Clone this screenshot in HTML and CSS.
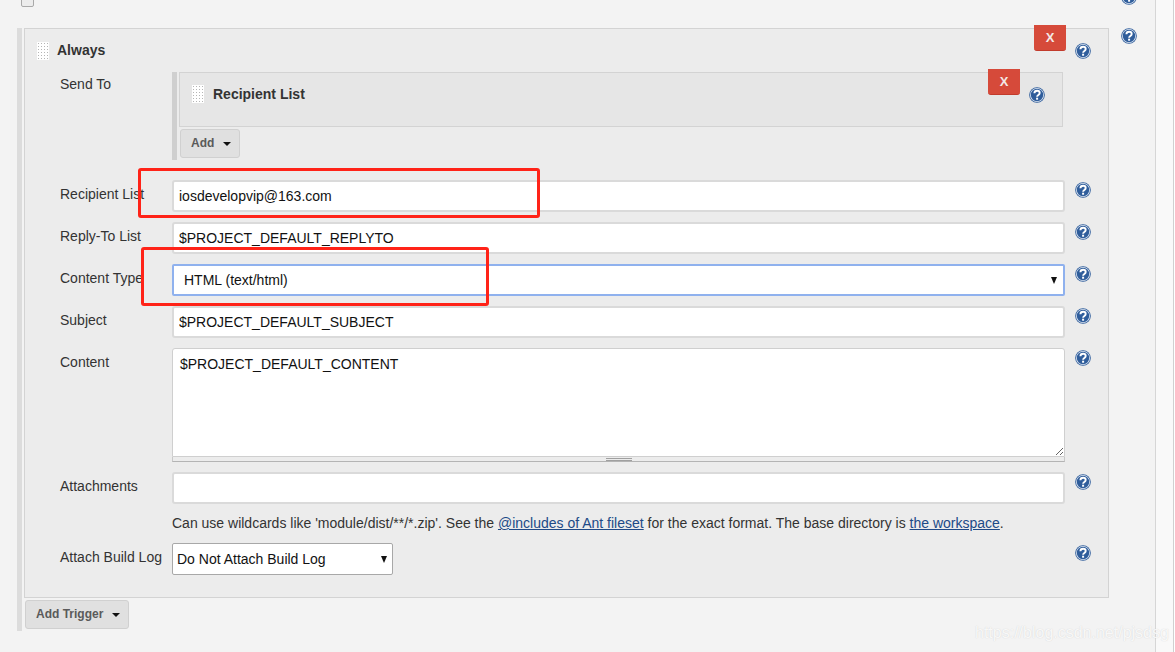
FILE: index.html
```html
<!DOCTYPE html>
<html lang="en">
<head>
<meta charset="utf-8">
<title>Always trigger</title>
<link rel="stylesheet" href="styles.css">
</head>
<body>
<svg class="defs" width="0" height="0" aria-hidden="true">
  <symbol id="help" viewBox="0 0 16 16">
    <circle cx="8" cy="8" r="7.8" fill="#2f5d9b"/>
    <circle cx="8" cy="8" r="7" fill="#dfe7f2"/>
    <circle cx="8" cy="8" r="6.2" fill="#2f5d9b"/>
    <path d="M5.4 6.2c0-1.6 1.2-2.5 2.7-2.5s2.6.9 2.6 2.3c0 1.9-2.6 1.9-2.6 3.7" fill="none" stroke="#fff" stroke-width="1.9"/>
    <rect x="7.1" y="10.7" width="2" height="2" fill="#fff"/>
  </symbol>
</svg>
<div class="page">
  <main class="main">
    <div class="top-row">
      <span class="checkbox"></span>
      <svg class="help help-top"><use href="#help"/></svg>
    </div>
    <div class="trigger-row">
      <section class="block">
        <div class="panel">
          <button class="delete delete-outer" type="button">X</button>
          <div class="heading heading-outer">
            <span class="handle"></span><b>Always</b>
          </div>
          <svg class="help help-outer"><use href="#help"/></svg>
          <div class="form">
            <div class="row">
              <label class="label label-send">Send To</label>
              <div class="send-list">
                <div class="inner-panel">
                  <button class="delete delete-inner" type="button">X</button>
                  <div class="heading heading-inner">
                    <span class="handle"></span><b>Recipient List</b>
                  </div>
                  <svg class="help help-inner"><use href="#help"/></svg>
                </div>
                <button class="menu-btn btn-add" type="button">Add<span class="caret"></span></button>
              </div>
            </div>
            <div class="row row-first">
              <label class="label">Recipient List</label>
              <input class="field" value="iosdevelopvip@163.com">
              <svg class="help"><use href="#help"/></svg>
            </div>
            <div class="row">
              <label class="label">Reply-To List</label>
              <input class="field" value="$PROJECT_DEFAULT_REPLYTO">
              <svg class="help"><use href="#help"/></svg>
            </div>
            <div class="row">
              <label class="label">Content Type</label>
              <div class="select select-focus">HTML (text/html)<span class="arrow"></span></div>
              <svg class="help"><use href="#help"/></svg>
            </div>
            <div class="row">
              <label class="label">Subject</label>
              <input class="field" value="$PROJECT_DEFAULT_SUBJECT">
              <svg class="help"><use href="#help"/></svg>
            </div>
            <div class="row">
              <label class="label">Content</label>
              <div class="area-wrap">
                <textarea class="area">$PROJECT_DEFAULT_CONTENT</textarea>
                <div class="grip"><span class="grip-lines"></span></div>
              </div>
              <svg class="help"><use href="#help"/></svg>
            </div>
            <div class="row">
              <label class="label">Attachments</label>
              <input class="field" value="">
              <svg class="help"><use href="#help"/></svg>
            </div>
            <div class="row row-note">
              <span></span>
              <p class="note">Can use wildcards like 'module/dist/**/*.zip'. See the <a href="#">@includes of Ant fileset</a> for the exact format. The base directory is <a href="#">the workspace</a>.</p>
            </div>
            <div class="row row-log">
              <label class="label">Attach Build Log</label>
              <div class="select select-log">Do Not Attach Build Log<span class="arrow"></span></div>
              <svg class="help"><use href="#help"/></svg>
            </div>
          </div>
        </div>
        <button class="menu-btn btn-trigger" type="button">Add Trigger<span class="caret"></span></button>
      </section>
      <svg class="help help-side"><use href="#help"/></svg>
    </div>
  </main>
  <div class="strip"></div>
</div>
<div class="mark mark-1"></div>
<div class="mark mark-2"></div>
<div class="watermark">https://blog.csdn.net/pjsdsg</div>
</body>
</html>
```
FILE: styles.css
```css
* { box-sizing: border-box; }
html, body { margin: 0; height: 100%; overflow: hidden; }
body {
  background: #fff;
  color: #333;
  font: 14px/16px "Liberation Sans", Arial, sans-serif;
  position: relative;
}
.defs { position: absolute; }
.page { display: flex; height: 652px; }
.main {
  width: 1156px;
  padding-left: 17px;
  background: #f3f3f3;
  border-right: 1px solid #d6d6d6;
  overflow: hidden;
}
.strip {
  width: 18px;
  background: #f9f9f9;
  border-right: 1px solid #d0d0d0;
}
.top-row { display: flex; height: 28px; align-items: flex-start; }
.checkbox {
  width: 13px; height: 13px;
  margin: -6px 0 0 4px;
  background: #ececec;
  border: 1px solid #a9a9a9;
  border-radius: 2px;
}
.help { width: 16px; height: 16px; display: block; flex: none; margin-top: 2px; }
.help-top { margin: -11px 0 0 1087px; }
.trigger-row { display: flex; align-items: flex-start; }
.help-side { margin: 0 0 0 12px; }
.block {
  width: 1092px;
  height: 603px;
  border-left: 5px solid #dcdcdc;
  padding-left: 2px;
}
.panel {
  position: relative;
  width: 1085px;
  height: 570px;
  background: #ececec;
  border: 1px solid #d3d3d3;
}
.heading { display: flex; align-items: center; color: #333; }
.heading-outer { height: 43px; padding: 0 0 2px 12px; gap: 8px; }
.heading-outer .handle { margin-top: 2px; }
.handle {
  width: 12px; height: 18px;
  background-color: #fff;
  background-image: radial-gradient(circle, #b5b5b5 0.9px, transparent 1px);
  background-size: 3px 3px;
}
.help-outer { position: absolute; left: 1050px; top: 14px; margin: 0; }
.delete {
  position: absolute;
  width: 32px; height: 26px;
  padding: 0;
  background: #d64a3a;
  border: 0;
  border-bottom: 1px solid #c23b2c;
  border-radius: 0 0 3px 3px;
  color: #f3e8e6;
  font: bold 13px/24px "Liberation Sans", Arial, sans-serif;
}
.delete-outer { left: 1009px; top: -4px; }
.delete-inner { left: 808px; top: -4px; }
.form { padding-left: 35px; }
.row {
  display: grid;
  grid-template-columns: 112px 893px 16px;
  column-gap: 0;
  margin-bottom: 10px;
}
.row > .help { margin-left: 10px; }
.row-first { margin-top: 20px; }
.label { padding-top: 6px; color: #333; white-space: nowrap; }
.label-send { padding-top: 4px; }
.send-list {
  height: 88px;
  border-left: 5px solid #cfcfcf;
  padding-left: 2px;
}
.inner-panel {
  position: relative;
  width: 884px;
  height: 55px;
  background: #e6e6e6;
  border: 1px solid #d3d3d3;
}
.heading-inner { height: 42px; padding: 0 0 0 12px; gap: 9px; }
.help-inner { position: absolute; left: 849px; top: 14px; margin: 0; }
.menu-btn {
  display: flex;
  align-items: center;
  background: #e0e0e0;
  border: 1px solid #d0d0d0;
  border-radius: 3px;
  color: #5a5a5a;
  font: bold 12px/14px "Liberation Sans", Arial, sans-serif;
}
.caret {
  width: 0; height: 0;
  margin-top: 2px;
  border: 4px solid transparent;
  border-top-color: #111;
  border-bottom: 0;
}
.btn-add {
  width: 60px; height: 29px;
  margin: 2px 0 0 1px;
  padding: 0 0 2px 10px;
}
.btn-add .caret { margin-left: 9px; }
.btn-trigger {
  width: 104px; height: 29px;
  margin: 2px 0 0 1px;
  padding: 0 0 2px 10px;
}
.btn-trigger .caret { margin-left: 9px; }
.field {
  width: 893px; height: 32px;
  padding: 0 5px;
  background: #fff;
  border: 2px solid #dadada;
  border-radius: 3px;
  color: #111;
  font: 14px "Liberation Sans", Arial, sans-serif;
  outline: none;
}
.select {
  position: relative;
  height: 32px;
  background: #fff;
  color: #111;
  line-height: 28px;
  border-radius: 2px;
}
.select-focus { padding-left: 10px; border: 2px solid #8fb1ee; }
.select-log {
  width: 221px;
  padding-left: 4px;
  border: 1px solid #a8a8a8;
  line-height: 30px;
}
.arrow {
  position: absolute;
  right: 6px; top: 11px;
  width: 0; height: 0;
  border: 3.5px solid transparent;
  border-top: 7px solid #111;
  border-bottom: 0;
}
.select-log .arrow { right: 5px; top: 12px; }
.area-wrap { height: 114px; }
.area {
  display: block;
  width: 893px; height: 109px;
  padding: 7px 7px;
  background: #fff;
  border: 1px solid #cfcfcf;
  border-radius: 3px 3px 0 0;
  color: #111;
  font: 14px/16px "Liberation Sans", Arial, sans-serif;
  resize: vertical;
  outline: none;
}
.grip {
  display: flex;
  justify-content: center;
  height: 5px;
  border: 1px solid #c8c8c8;
  border-top: 0;
  border-bottom: 1px solid #b4b4b4;
  background: #ececec;
}
.grip-lines {
  width: 26px; height: 3px;
  margin-top: 1px;
  border-top: 1px solid #a0a0a0;
  border-bottom: 1px solid #a0a0a0;
}
.row-note { margin: 1px 0 0; height: 29px; grid-template-columns: 112px 950px; }
.note { margin: 0; padding-top: 1px; white-space: nowrap; color: #333; }
.note a { color: #204a87; }
.mark {
  position: absolute;
  border: 3px solid #ff2318;
  border-radius: 3px;
}
.mark-1 { left: 138px; top: 168px; width: 402px; height: 50px; }
.mark-2 { left: 141px; top: 247px; width: 348px; height: 59px; }
.watermark {
  position: absolute;
  left: 975px; top: 623px;
  color: rgba(255,255,255,.85);
  font: 16px/20px "Liberation Sans", Arial, sans-serif;
  text-shadow: 0 0 1px rgba(190,190,190,.7);
  white-space: nowrap;
}
```
